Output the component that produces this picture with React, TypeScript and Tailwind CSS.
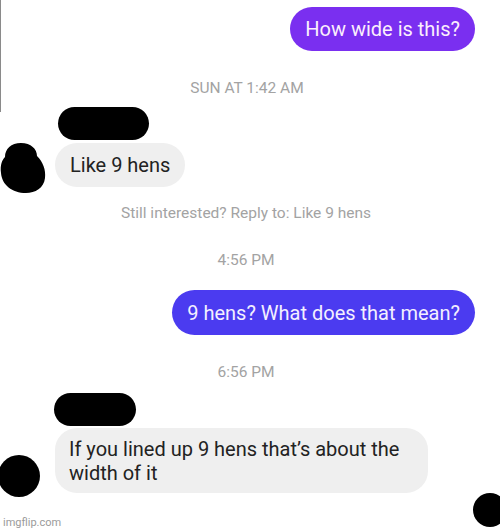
import type { ReactNode } from 'react'

const sans = { fontFamily: 'Roboto, "Liberation Sans", sans-serif' }

function Stamp({ children, className = '' }: { children: ReactNode; className?: string }) {
  return (
    <p className={`h-4 text-center text-[15.5px] leading-4 text-[#a3a3a3] ${className}`}>{children}</p>
  )
}

// black redaction marks over names / avatars
function BlobAvatar() {
  return (
    <svg width="46" height="50" viewBox="0 0 46 50" className="shrink-0">
      <path
        d="M21 0C31 0 37 6 37 13C43 19 46 27 45 35C44 45 35 50 26 50C12 50 2 42 1 30C0 22 2 17 5 14C5 6 11 0 21 0Z"
        fill="#000"
      />
    </svg>
  )
}

export default function App() {
  return (
    <div className="relative w-[500px] h-[532px] overflow-hidden bg-white" style={sans}>
      <div className="absolute left-0 top-0 h-[112px] w-px bg-[#8a8a8a]" />

      <div className="flex flex-col pt-[7px]">
        {/* outgoing */}
        <div className="flex justify-end pr-[25px]">
          <div className="flex h-[44px] items-center rounded-full bg-[#7a2ff0] px-[15px] text-[20px] text-[#fbeefc]">
            How wide is this?
          </div>
        </div>

        <Stamp className="mt-[29px] pr-[6px]">SUN AT 1:42 AM</Stamp>

        <div className="ml-[58px] mt-[11px] h-[33px] w-[91px] rounded-full bg-black" />

        <div className="mt-[3px] flex items-start">
          <BlobAvatar />
          <div className="ml-[9px] flex h-[44px] items-center rounded-full bg-[#efefef] px-[15px] text-[20px] text-[#222]">
            Like 9 hens
          </div>
        </div>

        <Stamp className="mt-[12px] pr-[8px]">Still interested? Reply to: Like 9 hens</Stamp>
        <Stamp className="mt-[31px] pr-[8px]">4:56 PM</Stamp>

        <div className="mt-[22px] flex justify-end pr-[25px]">
          <div className="flex h-[45px] items-center rounded-full bg-[#4b3bf0] px-[15px] text-[20px] text-[#f3efff]">
            9 hens? What does that mean?
          </div>
        </div>

        <Stamp className="mt-[29px] pr-[8px]">6:56 PM</Stamp>

        <div className="ml-[54px] mt-[13px] h-[33px] w-[82px] rounded-full bg-black" />

        <div className="mt-[2px] flex items-start">
          <div className="-ml-[2px] mt-[27px] h-[42px] w-[42px] shrink-0 rounded-full bg-black" />
          <div className="ml-[15px] w-[373px] rounded-[22px] bg-[#efefef] px-[14px] pt-[9px] pb-[8px] text-[20px] leading-6 text-[#222]">
            If you lined up 9 hens that’s about the width of it
          </div>
        </div>

        <p className="ml-[3px] mt-[18px] text-[11px] leading-4 text-[#9a9a9a]">imgflip.com</p>
      </div>

      <div className="absolute left-[473px] top-[493px] h-[34px] w-[34px] rounded-full bg-black" />
    </div>
  )
}
